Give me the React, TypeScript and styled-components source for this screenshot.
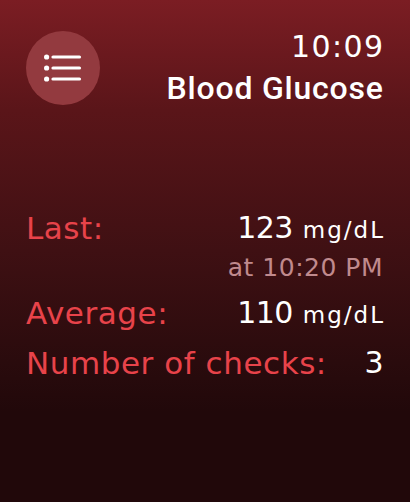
import React from "react";
import styled, { createGlobalStyle } from "styled-components";

const GlobalStyle = createGlobalStyle`
  html, body {
    margin: 0;
    padding: 0;
    background: #21080a;
  }
`;

type Stat = {
  label: string;
  value: string;
  unit?: string;
  note?: string;
};

const stats: Stat[] = [
  { label: "Last:", value: "123", unit: "mg/dL", note: "at 10:20 PM" },
  { label: "Average:", value: "110", unit: "mg/dL" },
  { label: "Number of checks:", value: "3" },
];

export default function App() {
  return (
    <>
      <GlobalStyle />
      <Screen>
        <Header>
          <MenuButton aria-label="Menu">
            <svg width="38" height="28" viewBox="0 0 38 28" fill="none">
              {[3, 14, 25].map((y) => (
                <React.Fragment key={y}>
                  <circle cx="2.6" cy={y} r="2.6" fill="#fff" />
                  <line x1="9" y1={y} x2="35.5" y2={y} stroke="#fff" strokeWidth="3.2" strokeLinecap="round" />
                </React.Fragment>
              ))}
            </svg>
          </MenuButton>
          <TitleBlock>
            <Time>10:09</Time>
            <Title>Blood Glucose</Title>
          </TitleBlock>
        </Header>

        <StatList>
          {stats.map((s) => (
            <StatRow key={s.label}>
              <Label>{s.label}</Label>
              <ValueBlock>
                <Value>
                  <Number>{s.value}</Number>
                  {s.unit && <Unit>{s.unit}</Unit>}
                </Value>
                {s.note && <Note>{s.note}</Note>}
              </ValueBlock>
            </StatRow>
          ))}
        </StatList>
      </Screen>
    </>
  );
}

const Screen = styled.div`
  box-sizing: border-box;
  width: 410px;
  height: 502px;
  padding: 29px 27px 0 26px;
  background: linear-gradient(
    180deg,
    #7b1d23 0%,
    #5a1519 22%,
    #3f1013 50%,
    #2a0b0d 72%,
    #21080a 82%,
    #21080a 100%
  );
  font-family: "DejaVu Sans", "Liberation Sans", sans-serif;
  color: #fff;
  overflow: hidden;
`;

const Header = styled.div`
  display: flex;
  justify-content: space-between;
  align-items: flex-start;
`;

const MenuButton = styled.div`
  margin-top: 2px;
  width: 74px;
  height: 74px;
  border-radius: 50%;
  background: #933a3f;
  display: flex;
  align-items: center;
  justify-content: center;
`;

const TitleBlock = styled.div`
  display: flex;
  flex-direction: column;
  align-items: flex-end;
`;

const Time = styled.div`
  font-size: 30px;
  line-height: 36px;
  letter-spacing: 1.4px;
  margin-right: -1.4px;
`;

const Title = styled.div`
  margin-top: 5px;
  font-family: Roboto, "Liberation Sans", sans-serif;
  font-weight: 500;
  font-size: 32px;
  line-height: 36px;
  letter-spacing: 0.8px;
  margin-right: -0.8px;
`;

const StatList = styled.div`
  margin-top: 104px;
  display: flex;
  flex-direction: column;
  gap: 12px;
`;

const StatRow = styled.div`
  display: flex;
  justify-content: space-between;
  align-items: flex-start;
`;

const Label = styled.div`
  color: #e8434a;
  font-size: 31px;
  line-height: 36px;
  letter-spacing: 0.55px;
`;

const ValueBlock = styled.div`
  display: flex;
  flex-direction: column;
  align-items: flex-end;
`;

const Value = styled.div`
  display: flex;
  align-items: baseline;
  gap: 10px;
  line-height: 36px;
`;

const Number = styled.span`
  font-size: 30px;
  letter-spacing: -0.6px;
`;

const Unit = styled.span`
  font-size: 23px;
  letter-spacing: 2px;
  margin-right: -2px;
`;

const Note = styled.div`
  margin-top: 5px;
  color: #c08a8d;
  font-size: 25px;
  line-height: 30px;
  letter-spacing: 0.5px;
`;
